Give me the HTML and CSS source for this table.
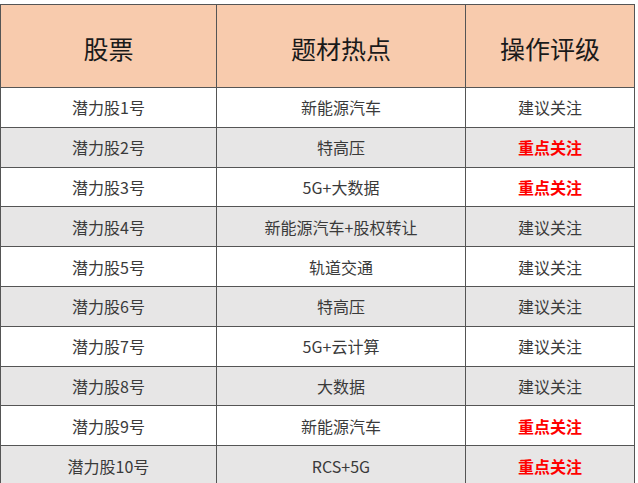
FILE: index.html
```html
<!DOCTYPE html>
<html lang="zh-CN">
<head>
<meta charset="utf-8">
<link rel="stylesheet" href="styles.css">
</head>
<body>
<div class="sheet">
  <div class="cell head">股票</div>
  <div class="cell head">题材热点</div>
  <div class="cell head">操作评级</div>

  <div class="cell">潜力股1号</div>
  <div class="cell">新能源汽车</div>
  <div class="cell">建议关注</div>

  <div class="cell alt">潜力股2号</div>
  <div class="cell alt">特高压</div>
  <div class="cell alt hot">重点关注</div>

  <div class="cell">潜力股3号</div>
  <div class="cell">5G+大数据</div>
  <div class="cell hot">重点关注</div>

  <div class="cell alt">潜力股4号</div>
  <div class="cell alt">新能源汽车+股权转让</div>
  <div class="cell alt">建议关注</div>

  <div class="cell">潜力股5号</div>
  <div class="cell">轨道交通</div>
  <div class="cell">建议关注</div>

  <div class="cell alt">潜力股6号</div>
  <div class="cell alt">特高压</div>
  <div class="cell alt">建议关注</div>

  <div class="cell">潜力股7号</div>
  <div class="cell">5G+云计算</div>
  <div class="cell">建议关注</div>

  <div class="cell alt">潜力股8号</div>
  <div class="cell alt">大数据</div>
  <div class="cell alt">建议关注</div>

  <div class="cell">潜力股9号</div>
  <div class="cell">新能源汽车</div>
  <div class="cell hot">重点关注</div>

  <div class="cell alt">潜力股10号</div>
  <div class="cell alt">RCS+5G</div>
  <div class="cell alt hot">重点关注</div>
</div>
</body>
</html>
```
FILE: styles.css
```css
html, body {
  margin: 0;
  padding: 0;
  background: #ffffff;
}
body {
  padding-top: 4px;
  font-family: "Noto Sans CJK SC", "Noto Sans", sans-serif;
}
.sheet {
  display: grid;
  grid-template-columns: 216px 249px 169px;
  grid-template-rows: 83px repeat(10, 39.8px);
  width: 635px;
  box-sizing: border-box;
  border-left: 1px solid #555555;
  border-top: 1px solid #555555;
}
.cell {
  box-sizing: border-box;
  border-right: 1px solid #555555;
  border-bottom: 1px solid #555555;
  display: flex;
  align-items: center;
  justify-content: center;
  font-size: 16px;
  color: #3a3a3a;
  background: #ffffff;
  white-space: nowrap;
}
.head {
  background: #f8cbad;
  font-size: 25px;
  color: #1a1a1a;
  padding-top: 4px;
}
.alt {
  background: #e7e6e6;
}
.hot {
  color: #ff0000;
  font-weight: 700;
}
```
